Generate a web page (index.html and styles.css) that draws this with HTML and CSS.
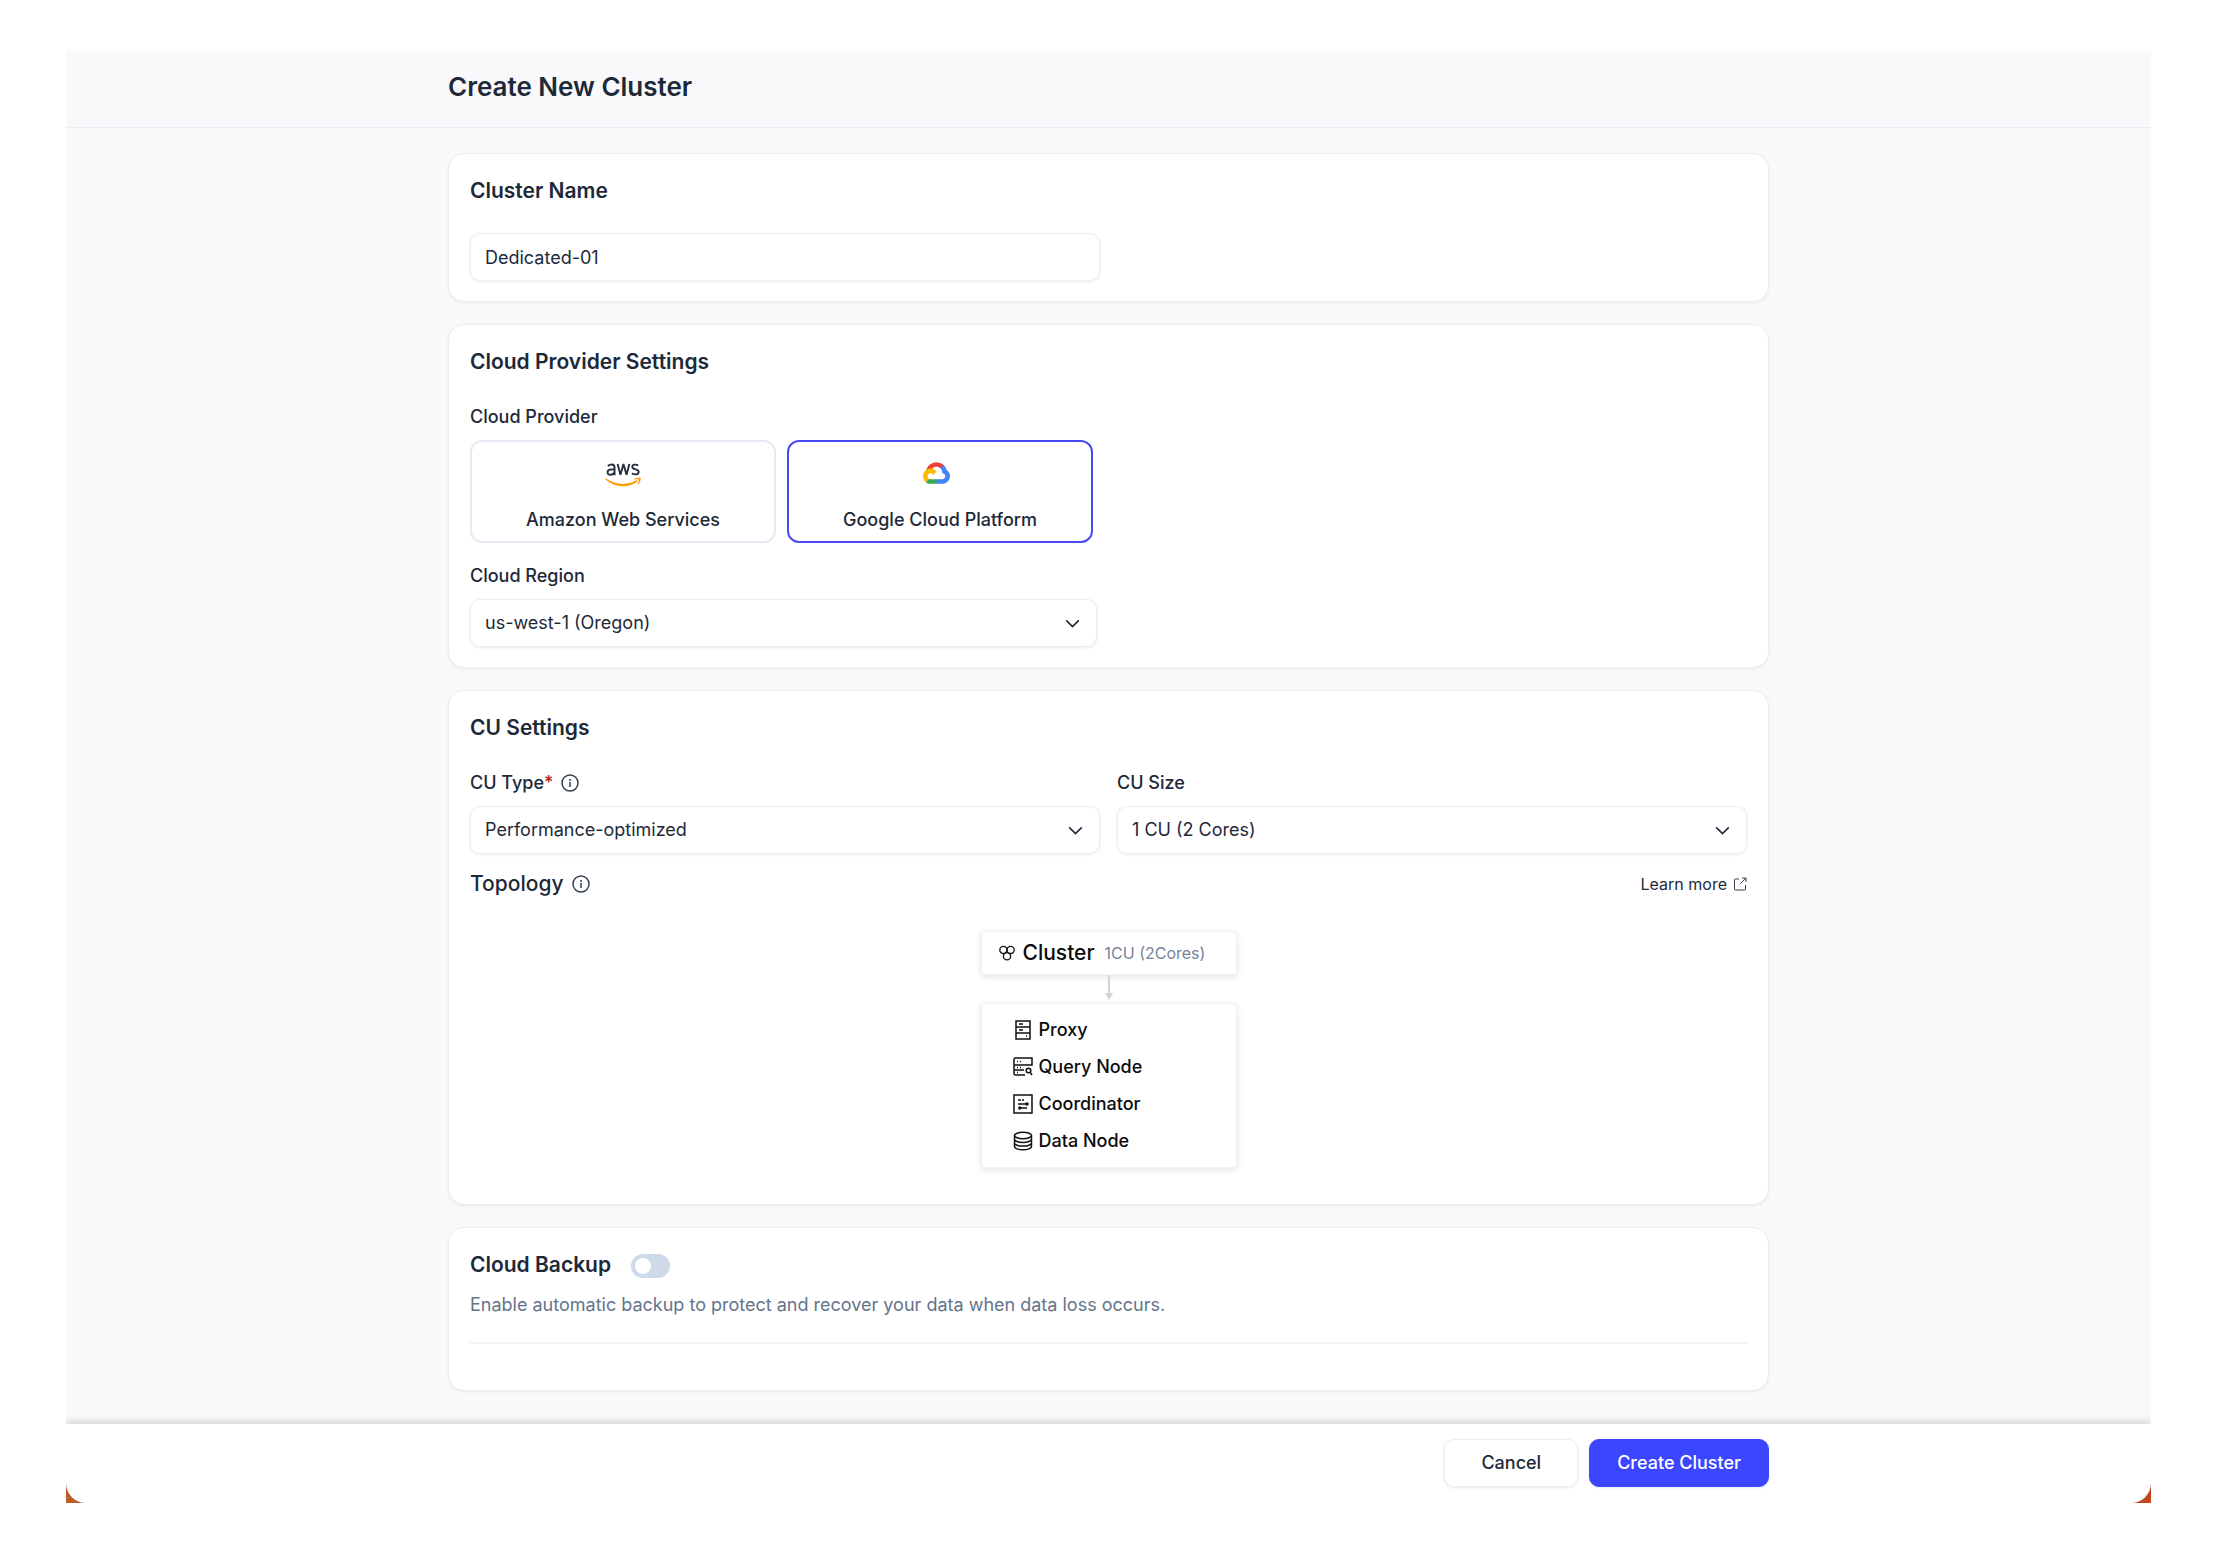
FILE: index.html
```html
<!DOCTYPE html>
<html lang="en">
<head>
<meta charset="utf-8">
<meta name="viewport" content="width=device-width, initial-scale=1">
<title>Create New Cluster</title>
<link rel="stylesheet" href="styles.css">
</head>
<body>
<form class="window">
  <header class="header">
    <div class="container"><h1 class="page-title">Create New Cluster</h1></div>
  </header>

  <main class="main">
    <div class="container stack">
      <section class="card">
        <h2 class="card-title"><label for="cluster-name">Cluster Name</label></h2>
        <div class="columns">
          <input class="field" id="cluster-name" type="text" value="Dedicated-01">
        </div>
      </section>

      <section class="card">
        <h2 class="card-title">Cloud Provider Settings</h2>
        <fieldset class="providers">
          <legend class="label">Cloud Provider</legend>
          <div class="provider-list">
            <label class="provider">
              <input class="provider-radio" type="radio" name="provider" value="aws">
              <svg class="provider-logo" viewBox="0 0 40 26" aria-hidden="true">
                <g fill="none" stroke="#252f3e" stroke-width="2">
                  <path d="M4 3.400c1.300-1 2.700-1.400 4-1.400 2.200 0 3.100 1 3.100 3v8.300M11.100 7.200c-4.600-.5-7.400.3-7.400 2.900 0 3.700 5.600 3.500 7.400 0"/>
                  <path d="M14.300 1.500l3 11.300 3.200-11.300 3.200 11.300 3-11.300" stroke-linejoin="bevel"/>
                  <path d="M36 2.900c-2.200-1.200-6.200-1.300-6.200 1.300 0 3.600 6.700 2 6.700 5.300 0 3.500-4.800 3.400-7.100 1.700"/>
                </g>
                <path d="M2.200 16.800c9.500 6.800 22.500 7.300 32 1.800 1-.6 1.800.5.900 1.300-8.700 7.300-24.200 6.800-33.500-2.300-.5-.6 0-1.200.6-.8z" fill="#f90"/>
                <path d="M31.300 17.300c2.500-1.700 6.700-1.700 7.200-1 .5.700-.3 4.300-2.300 6.200-.4.400-.8.200-.6-.3.600-1.500 1.300-3.700.9-4.300-.5-.6-3.200-.3-4.900-.1-.5 0-.6-.3-.3-.5z" fill="#f90"/>
              </svg>
              <span>Amazon Web Services</span>
            </label>
            <label class="provider">
              <input class="provider-radio" type="radio" name="provider" value="gcp" checked>
              <svg class="provider-logo gcp-logo" viewBox="0 0 256 206" aria-hidden="true">
                <path fill="#ea4335" d="M170.252 56.819l22.253-22.253 1.483-9.370C153.437-11.677 88.976-7.496 52.420 33.920 42.267 45.423 34.734 59.764 30.717 74.573l7.970-1.123 44.505-7.340 3.436-3.513c19.797-21.742 53.270-24.667 76.128-6.168l7.496.390z"/>
                <path fill="#4285f4" d="M224.205 73.918a100.249 100.249 0 0 0-30.217-48.722l-31.232 31.232a55.515 55.515 0 0 1 20.379 44.037v5.544c15.350 0 27.797 12.450 27.797 27.796 0 15.352-12.446 27.573-27.797 27.573h-55.671l-5.466 5.934v33.340l5.466 5.231h55.670c39.930.311 72.553-31.494 72.864-71.424a72.303 72.303 0 0 0-31.793-60.541z"/>
                <path fill="#34a853" d="M71.870 205.796h55.593V161.290H71.870a27.275 27.275 0 0 1-11.478-2.498l-7.887 2.420-22.409 22.252-1.952 7.574c12.567 9.489 27.977 14.825 43.726 14.758z"/>
                <path fill="#fbbc05" d="M71.870 61.425C31.943 61.664-.236 94.228.002 134.156a72.301 72.301 0 0 0 28.142 56.882l32.247-32.246c-13.990-6.322-20.208-22.786-13.887-36.776 6.320-13.990 22.786-20.208 36.775-13.888a27.796 27.796 0 0 1 13.887 13.888l32.248-32.248A72.224 72.224 0 0 0 71.870 61.425z"/>
              </svg>
              <span>Google Cloud Platform</span>
            </label>
          </div>
        </fieldset>
        <div class="columns">
          <div class="region">
            <label class="label" for="region">Cloud Region</label>
            <select class="field select" id="region"><option>us-west-1 (Oregon)</option></select>
          </div>
        </div>
      </section>

      <section class="card">
        <h2 class="card-title">CU Settings</h2>
        <div class="columns">
          <div>
            <div class="label-row">
              <label class="label" for="cu-type">CU Type<span class="required">*</span></label>
              <svg class="info" viewBox="0 0 18 18" aria-hidden="true"><circle cx="9" cy="9" r="8"/><path d="M9 8v5M9 5v2"/></svg>
            </div>
            <select class="field select" id="cu-type"><option>Performance-optimized</option></select>
          </div>
          <div>
            <label class="label" for="cu-size">CU Size</label>
            <select class="field select" id="cu-size"><option>1 CU (2 Cores)</option></select>
          </div>
        </div>
        <div class="topology-head">
          <h3 class="topology-title">Topology
            <svg class="info" viewBox="0 0 18 18" aria-hidden="true"><circle cx="9" cy="9" r="8"/><path d="M9 8v5M9 5v2"/></svg>
          </h3>
          <a class="learn-more" href="#">Learn more
            <svg class="external" viewBox="0 0 14 14" aria-hidden="true"><path d="M6 2H2.500a1 1 0 0 0-1 1v9a1 1 0 0 0 1 1h9a1 1 0 0 0 1-1V8M9 1h4v4M13 1L7.500 6.500"/></svg>
          </a>
        </div>
        <div class="topology">
          <div class="node cluster-node">
            <svg class="cluster-icon" viewBox="0 0 16 16" aria-hidden="true"><circle cx="4.400" cy="4.900" r="3.600"/><circle cx="11.600" cy="4.900" r="3.600"/><circle cx="8" cy="11.300" r="3.600"/></svg>
            <strong class="cluster-name">Cluster</strong>
            <span class="cluster-size">1CU (2Cores)</span>
          </div>
          <svg class="arrow" viewBox="0 0 8 28" aria-hidden="true"><path d="M4 0v20" stroke="#d0d5dd" stroke-width="2"/><path d="M0 18h8l-4 7z" fill="#d0d5dd"/></svg>
          <ul class="node parts">
            <li class="part"><svg class="part-icon" viewBox="0 0 20 20" aria-hidden="true"><path d="M3 1h14v18H3zM3 7h14M3 13h14M6 4h4M6 10h4M13 16h1"/></svg>Proxy</li>
            <li class="part"><svg class="part-icon" viewBox="0 0 20 20" aria-hidden="true"><path d="M12 18H2.500a1.500 1.500 0 0 1-1.500-1.500v-14A1.500 1.500 0 0 1 2.500 1H19v7H1M1 13h10M4 4.500h1M7 4.500h1M4 10.500h1M7 10.500h1M4 15.500h1"/><circle cx="15.500" cy="13.500" r="2.300"/><path d="M17.300 15.300L19 18"/></svg>Query Node</li>
            <li class="part"><svg class="part-icon" viewBox="0 0 20 20" aria-hidden="true"><path d="M1 1h18v18H1zM5 6h3M9 6h2M5 10h9M8 14h6"/><circle cx="6.800" cy="14" r="1"/><circle cx="14" cy="10" r="1"/></svg>Coordinator</li>
            <li class="part"><svg class="part-icon" viewBox="0 0 20 20" aria-hidden="true"><ellipse cx="10" cy="4.500" rx="8.500" ry="3.200"/><path d="M1.500 4.500v11c0 1.800 3.800 3.300 8.500 3.300s8.500-1.500 8.500-3.300v-11M1.500 8.200c0 1.800 3.800 3.200 8.500 3.200s8.500-1.400 8.500-3.200M1.500 11.900c0 1.800 3.800 3.200 8.500 3.200s8.500-1.400 8.500-3.200"/></svg>Data Node</li>
          </ul>
        </div>
      </section>

      <section class="card">
        <div class="backup-head">
          <h2 class="backup-title"><label for="backup">Cloud Backup</label></h2>
          <input class="switch" id="backup" type="checkbox" role="switch">
        </div>
        <p class="description">Enable automatic backup to protect and recover your data when data loss occurs.</p>
        <hr class="divider">
      </section>
    </div>
  </main>

  <footer class="footer">
    <div class="container actions">
      <button class="button" type="button">Cancel</button>
      <button class="button button-primary" type="submit">Create Cluster</button>
    </div>
  </footer>
</form>
</body>
</html>
```

FILE: styles.css
```css
* { box-sizing: border-box; }

body {
  margin: 0;
  background: #fff;
  color: #1d2939;
  font-family: Inter, "Liberation Sans", sans-serif;
  font-size: 18px;
  font-optical-sizing: none;
  line-height: 26px;
}

h1, h2, h3, p, ul { margin: 0; padding: 0; }
input, select, button { font: inherit; font-optical-sizing: inherit; color: inherit; }

.window {
  display: flex;
  flex-direction: column;
  min-height: calc(100vh - 102px);
  margin: 51px 66px;
  background: linear-gradient(to right, #bf5f2a, #c8481f);
}

.container {
  width: 100%;
  max-width: 1321px;
  margin: 0 auto;
}

.header {
  padding: 20px 0 24px;
  border-bottom: 1px solid #e8edf3;
  background: #f9f9fb;
}

.page-title {
  font-size: 26px;
  font-weight: 600;
  line-height: 32px;
}

.main {
  flex: 1;
  padding: 25px 0 31px;
  background: #f9f9fb;
}

.stack {
  display: flex;
  flex-direction: column;
  gap: 22px;
}

.card {
  padding: 21px 21px 20px;
  border: 1px solid #e9edf4;
  border-radius: 16px;
  background: #fff;
  box-shadow: 0 1px 3px rgba(16, 24, 40, 0.06);
}

.card-title, .backup-title {
  font-size: 21px;
  font-weight: 600;
  line-height: 32px;
}

.card-title { margin-bottom: 26px; }

.columns {
  display: grid;
  grid-template-columns: 1fr 1fr;
  gap: 17px;
}

.field {
  display: block;
  width: 100%;
  height: 48px;
  padding: 0 14px;
  border: 1px solid #e9eef5;
  border-radius: 10px;
  background: #fff;
  box-shadow: 0 1px 3px rgba(16, 24, 40, 0.08);
}

.select {
  appearance: none;
  padding-right: 48px;
  background: #fff url("data:image/svg+xml,%3Csvg xmlns='http://www.w3.org/2000/svg' viewBox='0 0 16 10'%3E%3Cpath d='M1 1.500l7 7 7-7' fill='none' stroke='%231d2939' stroke-width='1.700'/%3E%3C/svg%3E") no-repeat right 16px center / 15px 9px;
}

.label {
  display: block;
  margin-bottom: 10px;
  padding: 0;
  font-weight: 500;
}

.label-row {
  display: flex;
  align-items: center;
  gap: 8px;
  margin-bottom: 10px;
}

.label-row .label { margin: 0; }
.required { color: #b42318; }

.info {
  width: 18px;
  height: 18px;
  fill: none;
  stroke: #344054;
  stroke-width: 1.5;
}

.providers {
  margin: 0 0 20px;
  padding: 0;
  border: 0;
}

.provider-list {
  display: flex;
  gap: 11px;
}

.provider {
  position: relative;
  display: flex;
  flex-direction: column;
  align-items: center;
  justify-content: space-between;
  width: 306px;
  height: 103px;
  padding: 20px 16px 8px;
  border: 2px solid #e6ebf3;
  border-radius: 12px;
  font-weight: 500;
  cursor: pointer;
}

.provider:has(:checked) { border-color: #4a4af4; }

.provider-radio {
  position: absolute;
  inset: 0;
  margin: 0;
  opacity: 0;
}

.provider-logo {
  width: 38px;
  height: 26px;
}

.gcp-logo {
  width: 27px;
  height: 22px;
  margin-right: 8px;
}

.region { padding-right: 3px; }

.topology-head {
  display: flex;
  align-items: center;
  justify-content: space-between;
  margin: 14px 0 31px;
}

.topology-title {
  display: flex;
  align-items: center;
  gap: 8px;
  font-size: 21px;
  font-weight: 500;
  line-height: 32px;
}

.learn-more {
  display: flex;
  align-items: center;
  gap: 6px;
  color: inherit;
  font-size: 16px;
  text-decoration: none;
}

.external {
  width: 14px;
  height: 14px;
  fill: none;
  stroke: #344054;
}

.topology {
  display: flex;
  flex-direction: column;
  align-items: center;
  margin-bottom: 16px;
  color: #0c0c0d;
}

.node {
  width: 256px;
  border: 1px solid #f3f3f5;
  border-radius: 4px;
  background: #fff;
  box-shadow: 0 2px 6px rgba(16, 24, 40, 0.12);
}

.cluster-node {
  display: flex;
  align-items: center;
  height: 44px;
  padding: 0 17px;
}

.cluster-icon {
  width: 16px;
  height: 16px;
  fill: none;
  stroke: #111;
  stroke-width: 1.3;
}

.cluster-name {
  margin: 0 10px 0 8px;
  font-size: 21px;
  font-weight: 500;
}

.cluster-size {
  color: #76839b;
  font-size: 16px;
}

.arrow {
  width: 8px;
  height: 28px;
}

.parts {
  display: flex;
  flex-direction: column;
  gap: 11px;
  padding: 13px 31px;
  list-style: none;
}

.part {
  display: flex;
  align-items: center;
  gap: 6px;
  font-weight: 500;
}

.part-icon {
  width: 20px;
  height: 20px;
  fill: none;
  stroke: #111;
  stroke-width: 1.5;
}

.backup-head {
  display: flex;
  align-items: center;
  gap: 20px;
}

.switch {
  display: flex;
  align-items: center;
  appearance: none;
  width: 39px;
  height: 24px;
  margin: 2px 0 0;
  padding: 4px;
  border-radius: 12px;
  background: #ced9e9;
}

.switch::before {
  content: "";
  width: 16px;
  height: 16px;
  border-radius: 50%;
  background: #fff;
}

.switch:checked { justify-content: flex-end; background: #3d46ff; }

.description {
  margin-top: 11px;
  color: #64748b;
}

.divider {
  margin: 24px 0 26px;
  border: 0;
  border-top: 2px solid #f0f4f9;
}

.footer {
  padding: 15px 0 16px;
  border-radius: 0 0 20px 20px;
  background: #fff;
  box-shadow: 0 -2px 8px rgba(0, 0, 0, 0.18);
  clip-path: inset(-10px 0 0 0);
}

.actions {
  display: flex;
  justify-content: flex-end;
  gap: 11px;
}

.button {
  height: 48px;
  padding: 0 36px;
  border: 1px solid #e9eef5;
  border-radius: 10px;
  background: #fff;
  box-shadow: 0 1px 3px rgba(16, 24, 40, 0.08);
  font-weight: 500;
}

.button-primary {
  padding: 0 27px;
  border-color: #3d46ff;
  background: #3d46ff;
  color: #fff;
}
```
